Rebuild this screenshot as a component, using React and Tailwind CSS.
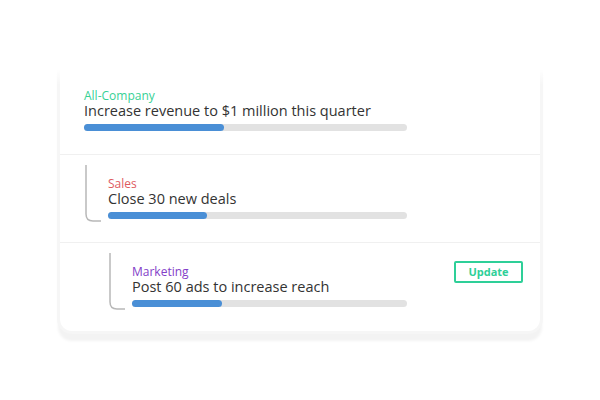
import React from "react";

function Connector() {
  return (
    <svg
      className="absolute left-[-23px] top-[-12px]"
      width="20"
      height="60"
      viewBox="0 0 20 60"
      fill="none"
    >
      <path d="M1 0 V49 Q1 56 8 56 H16" stroke="#b8b8b8" strokeWidth="1.5" />
    </svg>
  );
}

function Row({ indent, label, labelColor, title, width, fill, last, connector, button }) {
  return (
    <div
      className={`relative flex h-[88px] items-start justify-between pr-[17px] pt-[22px] ${last ? "" : "border-b border-[#f0f0f0]"}`}
      style={{ paddingLeft: indent }}
    >
      <div className="relative flex flex-col">
        {connector && <Connector />}
        <div className={`text-[12px] leading-[14px] ${labelColor}`}>{label}</div>
        <div className="text-[14.5px] leading-[16px] text-[#333333]">{title}</div>
        <div className="mt-[5px] flex h-[7px] rounded-full bg-[#e2e2e2]" style={{ width }}>
          <div className="h-full rounded-full bg-[#4a8fd6]" style={{ width: fill }} />
        </div>
      </div>
      {button && (
        <div className="mt-[-4px] flex h-[22px] w-[69px] items-center justify-center rounded-[2px] border-2 border-[#2ecf98] text-[11px] font-bold text-[#2ecf98]">
          Update
        </div>
      )}
    </div>
  );
}

export default function App() {
  return (
    <div
      className="flex h-[400px] w-[600px] flex-col overflow-hidden bg-white px-[60px] pt-[67px]"
      style={{ fontFamily: '"Open Sans", "Noto Sans", sans-serif' }}
    >
      <div className="relative w-[480px]">
        <div className="flex flex-col rounded-b-[12px] bg-white shadow-[0_0_0_3px_#f6f6f6,0_8px_3px_2px_#f3f3f3]">
          <Row
            indent={24}
            label="All-Company"
            labelColor="text-[#36d195]"
            title="Increase revenue to $1 million this quarter"
            width={323}
            fill={140}
          />
          <Row
            indent={48}
            label="Sales"
            labelColor="text-[#de5a5f]"
            title="Close 30 new deals"
            width={299}
            fill={99}
            connector
          />
          <Row
            indent={72}
            label="Marketing"
            labelColor="text-[#8340c8]"
            title="Post 60 ads to increase reach"
            width={275}
            fill={90}
            connector
            button
            last
          />
        </div>
        <div className="pointer-events-none absolute left-[-12px] right-[-12px] top-[-14px] h-[32px] bg-gradient-to-b from-white via-white to-transparent" />
      </div>
    </div>
  );
}
